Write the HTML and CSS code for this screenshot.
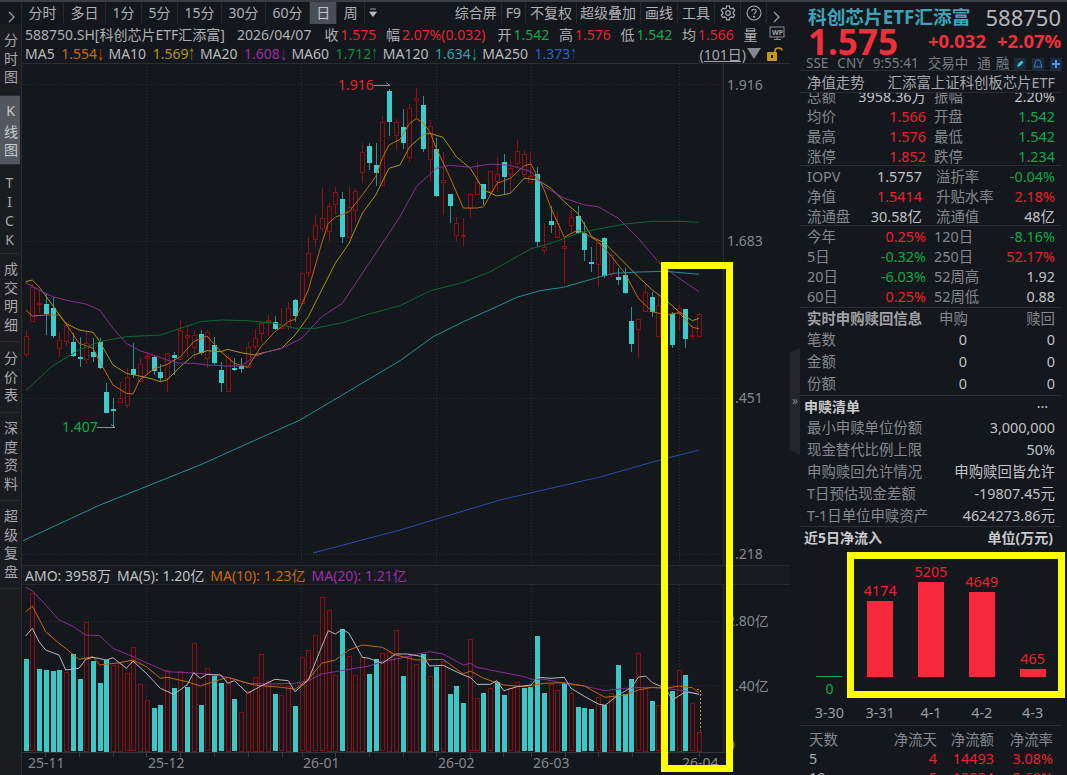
FILE: index.html
```html
<!DOCTYPE html>
<html lang="zh-CN">
<head>
  <meta charset="UTF-8">
  <title>科创芯片ETF汇添富 588750</title>
  <link rel="stylesheet" href="styles.css">
</head>
<body>
  <div class="top-strip"></div>
  <div class="app">
    <div class="main">
      <div class="toolbar">
        <div class="tool chevron"><svg width="8" height="12" viewBox="0 0 8 12"><path d="M1 1l5 5-5 5" fill="none" stroke="#9a9da1" stroke-width="1.3"/></svg></div>
        <div class="tool">分时</div>
        <div class="tool">多日</div>
        <div class="tool">1分</div>
        <div class="tool">5分</div>
        <div class="tool">15分</div>
        <div class="tool">30分</div>
        <div class="tool">60分</div>
        <div class="tool active">日</div>
        <div class="tool">周</div>
        <div class="tool tiny">
          <svg width="10" height="10" viewBox="0 0 10 10"><path d="M2 1h6M1.500 4h7L5 8.500z" fill="#b8babd" stroke="#b8babd" stroke-width=".8"/></svg>
        </div>
        <div class="tool-spacer"></div>
        <div class="tool right">综合屏</div>
        <div class="tool right">F9</div>
        <div class="tool right">不复权</div>
        <div class="tool right tight">超级叠加</div>
        <div class="tool right">画线</div>
        <div class="tool right">工具</div>
        <div class="tool icon">
          <svg width="16" height="16" viewBox="0 0 16 16" fill="none" stroke="#a9abae" stroke-width="1.200"><path d="M6.600 1h2.800l.4 2 1.500.9 2-.7 1.400 2.400-1.500 1.400v1.800l1.500 1.400-1.400 2.400-2-.7-1.500.9-.4 2H6.600l-.4-2-1.500-.9-2 .7-1.400-2.400 1.500-1.400V7.200L1.300 5.600l1.400-2.400 2 .7 1.500-.9z"/><circle cx="8" cy="8" r="2.300"/></svg>
        </div>
        <div class="tool icon">
          <svg width="16" height="16" viewBox="0 0 16 16" fill="none" stroke="#a9abae" stroke-width="1.100"><circle cx="8" cy="8" r="7"/><path d="M5.800 6.300C5.800 5 6.800 4.200 8 4.200s2.200.8 2.200 2c0 1.700-2.200 1.700-2.200 3.400"/><circle cx="8" cy="11.800" r=".5" fill="#a9abae"/></svg>
        </div>
        <div class="tool icon last"><svg width="8" height="12" viewBox="0 0 8 12"><path d="M1 1l5 5-5 5" fill="none" stroke="#9a9da1" stroke-width="1.300"/></svg></div>
      </div>

      <div class="workspace">
        <div class="side-nav">
          <div class="side-item first">分时图</div>
          <div class="side-item current">K线图</div>
          <div class="side-item tick">TICK</div>
          <div class="side-item tall">成交明细</div>
          <div class="side-item mid">分价表</div>
          <div class="side-item tall">深度资料</div>
          <div class="side-item tall">超级复盘</div>
        </div>

        <div class="chart-col">
          <div class="info-row">
            <span class="code">588750.SH[科创芯片ETF汇添富]</span>
            <span class="date">2026/04/07</span>
            <span class="stat">收<b class="red">1.575</b></span>
            <span class="stat">幅<b class="red">2.07%(0.032)</b></span>
            <span class="stat open">开<b class="green">1.542</b></span>
            <span class="stat">高<b class="red">1.576</b></span>
            <span class="stat">低<b class="green">1.542</b></span>
            <span class="stat">均<b class="red">1.566</b></span>
            <span class="stat">量</span>
            <svg class="wp-icon" width="18" height="16" viewBox="0 0 18 16">
              <rect x="1" y="1" width="14" height="10" fill="none" stroke="#888b90"/>
              <text x="3" y="9" font-size="7" font-weight="700" fill="#a0a2a6">WP</text>
              <path d="M5 13.500h7M8 11v2.500" stroke="#888b90"/>
              <path d="M15.500 10.500h2" stroke="#c8242e" stroke-dasharray="1 1"/>
            </svg>
          </div>
          <div class="ma-row">
            <span>MA5</span><span class="ma5">1.554<i>↓</i></span>
            <span>MA10</span><span class="ma10">1.569<i>↑</i></span>
            <span>MA20</span><span class="ma20">1.608<i>↓</i></span>
            <span>MA60</span><span class="ma60">1.712<i>↑</i></span>
            <span>MA120</span><span class="ma120">1.634<i>↓</i></span>
            <span>MA250</span><span class="ma250">1.373<i>↑</i></span>
            <span class="range">(101日)</span>
            <span class="range-arrow"></span>
            <svg class="lock" width="16" height="14" viewBox="0 0 16 14">
              <rect x="0" y="5" width="10" height="9" rx="1" fill="#c9971c"/>
              <rect x="4" y="8" width="2" height="3" fill="#14171c"/>
              <path d="M8 5V3.500C8 2 9.500 1 11.500 1S15 2 15 3.500" fill="none" stroke="#c9971c" stroke-width="1.500"/>
            </svg>
          </div>
          <svg id="kline" class="kline" width="768" height="501" viewBox="22 64 768 501"></svg>
          <div class="amo-row">
            <span>AMO: 3958万</span>
            <span>MA(5): 1.20亿</span>
            <span class="ma5">MA(10): 1.23亿</span>
            <span class="ma20">MA(20): 1.21亿</span>
          </div>
          <svg id="volume" class="volume" width="768" height="190" viewBox="22 585 768 190"></svg>
        </div>
      </div>
    </div>

    <div class="panel">
      <div class="stock-head">
        <div class="name-row"><span class="stock-name">科创芯片ETF汇添富</span><span class="stock-code">588750</span></div>
        <div class="price-row">
          <span class="price">1.575</span>
          <span class="change">+0.032</span>
          <span class="change">+2.07%</span>
        </div>
        <div class="status-row">
          <span>SSE</span><span>CNY</span><span>9:55:41</span><span>交易中</span><span class="tong">通</span><span>融</span>
          <div class="status-icons">
            <svg width="12" height="12" viewBox="0 0 12 12"><rect width="12" height="12" fill="#1c2a3a"/><path d="M3 9l1-3 3.500-3.500 2 2L6 8z" fill="#35c4d8"/></svg>
            <svg width="12" height="12" viewBox="0 0 12 12"><rect width="12" height="12" fill="#1c2a3a"/><path d="M6 2c-2 0-2.800 1.500-2.800 3.500L2 9h8L8.800 5.500C8.800 3.500 8 2 6 2z" fill="none" stroke="#2f7fd0"/></svg>
            <svg width="12" height="12" viewBox="0 0 12 12"><rect width="12" height="12" fill="#1c2a3a"/><path d="M6 2v8M2 6h8" stroke="#3b9cf0" stroke-width="2"/></svg>
          </div>
        </div>
      </div>

      <div class="nav-row"><span>净值走势</span><span class="fund-name">汇添富上证科创板芯片ETF</span></div>

      <div class="section sec-trade">
        <div class="qrow clipped"><span>总额</span><span class="val">3958.36万</span><span>振幅</span><span class="val">2.20%</span></div>
        <div class="qrow"><span>均价</span><span class="val red">1.566</span><span>开盘</span><span class="val green">1.542</span></div>
        <div class="qrow"><span>最高</span><span class="val red">1.576</span><span>最低</span><span class="val green">1.542</span></div>
        <div class="qrow"><span>涨停</span><span class="val red">1.852</span><span>跌停</span><span class="val green">1.234</span></div>
      </div>

      <div class="section sec-nav">
        <div class="qrow wide"><span>IOPV</span><span class="val">1.5757</span><span>溢折率</span><span class="val green">-0.04%</span></div>
        <div class="qrow wide"><span>净值</span><span class="val red">1.5414</span><span>升贴水率</span><span class="val red">2.18%</span></div>
        <div class="qrow wide"><span>流通盘</span><span class="val">30.58亿</span><span>流通值</span><span class="val">48亿</span></div>
      </div>

      <div class="section sec-perf">
        <div class="qrow"><span>今年</span><span class="val red">0.25%</span><span>120日</span><span class="val green">-8.16%</span></div>
        <div class="qrow"><span>5日</span><span class="val green">-0.32%</span><span>250日</span><span class="val red">52.17%</span></div>
        <div class="qrow"><span>20日</span><span class="val green">-6.03%</span><span>52周高</span><span class="val">1.92</span></div>
        <div class="qrow"><span>60日</span><span class="val red">0.25%</span><span>52周低</span><span class="val">0.88</span></div>
      </div>

      <div class="section sec-redeem">
        <div class="rrow head"><strong>实时申购赎回信息</strong><span>申购</span><span>赎回</span></div>
        <div class="rrow"><span>笔数</span><span class="val">0</span><span class="val">0</span></div>
        <div class="rrow"><span>金额</span><span class="val">0</span><span class="val">0</span></div>
        <div class="rrow"><span>份额</span><span class="val">0</span><span class="val">0</span></div>
      </div>

      <div class="section sec-list">
        <div class="list-title"><strong>申赎清单</strong><span class="dots">···</span></div>
        <div class="lrow"><span>最小申赎单位份额</span><span class="val">3,000,000</span></div>
        <div class="lrow"><span>现金替代比例上限</span><span class="val">50%</span></div>
        <div class="lrow"><span>申购赎回允许情况</span><span class="val">申购赎回皆允许</span></div>
        <div class="lrow"><span>T日预估现金差额</span><span class="val">-19807.45元</span></div>
        <div class="lrow"><span>T-1日单位申赎资产</span><span class="val">4624273.86元</span></div>
      </div>

      <div class="flow-title"><strong>近5日净流入</strong><strong>单位(万元)</strong></div>

      <div class="flow-chart">
        <div class="flow-col zero">
          <div class="flow-bar" style="height:1px"></div>
          <div class="flow-below">0</div>
          <div class="flow-date">3-30</div>
        </div>
        <div class="flow-col">
          <span class="flow-value">4174</span>
          <div class="flow-bar" style="height:76px"></div>
          <div class="flow-below"></div>
          <div class="flow-date">3-31</div>
        </div>
        <div class="flow-col">
          <span class="flow-value">5205</span>
          <div class="flow-bar" style="height:95px"></div>
          <div class="flow-below"></div>
          <div class="flow-date">4-1</div>
        </div>
        <div class="flow-col">
          <span class="flow-value">4649</span>
          <div class="flow-bar" style="height:85px"></div>
          <div class="flow-below"></div>
          <div class="flow-date">4-2</div>
        </div>
        <div class="flow-col">
          <span class="flow-value">465</span>
          <div class="flow-bar" style="height:8px"></div>
          <div class="flow-below"></div>
          <div class="flow-date">4-3</div>
        </div>
      </div>

      <div class="net-table">
        <div class="nrow head"><span>天数</span><span>净流天</span><span>净流额</span><span>净流率</span></div>
        <div class="nrow"><span class="days">5</span><span class="red">4</span><span class="red">14493</span><span class="red">3.08%</span></div>
        <div class="nrow"><span class="days">10</span><span class="red">5</span><span class="red">12834</span><span class="red">2.69%</span></div>
      </div>
    </div>
  </div>

  <div class="handle"><span>»</span></div>
  <div class="mark mark-chart"></div>
  <div class="mark mark-flow"></div>

  <script src="chart.js"></script>
</body>
</html>
```

FILE: styles.css
```css
* {
  box-sizing: border-box;
}

html, body {
  margin: 0;
  height: 100%;
  overflow: hidden;
}

body {
  position: relative;
  background: #14171c;
  color: #aeb0b3;
  font-family: "Noto Sans", "Noto Sans CJK SC", sans-serif;
  font-size: 14px;
}

b {
  font-weight: 400;
}

.red { color: #e8232f; }
.green { color: #12a84a; }
.ma5 { color: #c9690f; }
.ma10 { color: #b09a1c; }
.ma20 { color: #9c2fa8; }
.ma60 { color: #128a3c; }
.ma120 { color: #2aa5a8; }
.ma250 { color: #3160c8; }

.top-strip {
  height: 2px;
  background: #3a3d42;
}

.app {
  display: flex;
  height: 773px;
}

.main {
  width: 790px;
  flex: none;
}

/* toolbar */
.toolbar {
  display: flex;
  height: 22px;
  align-items: stretch;
  line-height: 22px;
}

.tool {
  padding: 0 6.500px;
  border-right: 1px solid #26292d;
  white-space: nowrap;
}

.tool.chevron {
  width: 22px;
  padding: 5px 0 0 8px;
}

.tool.active {
  width: 27px;
  padding: 0 6px;
  background: #4b4e56;
  color: #c4c6c9;
}

.tool.tiny {
  padding: 0 0 0 3px;
  border-right: none;
  width: 13px;
}

.tool.right {
  padding: 0 4px;
}

.tool.right.tight {
  padding-left: 3px;
}

.tool.icon {
  width: 26px;
  padding: 3px 0 0 5px;
}

.tool.last {
  width: 23px;
  padding: 5px 0 0 6px;
  border-right: none;
}

.tool-spacer {
  flex: 1;
}

.workspace {
  display: flex;
  height: 751px;
}

/* left tabs */
.side-nav {
  width: 22px;
  flex: none;
  background: #1a1c20;
  border-right: 1px solid #2a2d31;
}

.side-item {
  display: flex;
  justify-content: center;
  align-items: center;
  writing-mode: vertical-rl;
  text-orientation: upright;
  letter-spacing: 4.500px;
  height: 88px;
  padding-top: 3px;
  border-bottom: 1px solid #2a2d31;
  color: #a6a8ab;
}

.side-item.first { height: 72px; }
.side-item.current { height: 69px; background: #53565f; color: #c8cacc; }
.side-item.tick { height: 89px; letter-spacing: 0; }
.side-item.mid { height: 71px; }

/* chart column */
.chart-col {
  flex: 1;
  min-width: 0;
}

.info-row {
  display: flex;
  align-items: center;
  height: 20px;
  padding-left: 3px;
  white-space: nowrap;
}

.info-row .date { margin-left: 12px; }
.info-row .stat { margin-left: 9.700px; }
.info-row .date + .stat { margin-left: 13px; }
.info-row .stat.open { margin-left: 12px; }
.info-row .stat b { margin-left: 2px; }

.wp-icon {
  margin-left: auto;
  margin-right: 3px;
}

.ma-row {
  display: flex;
  align-items: center;
  gap: 6.500px;
  height: 20px;
  padding-left: 3px;
  border-bottom: 1px solid #2a2d31;
  color: #b8babd;
  white-space: nowrap;
}

.ma-row i {
  display: inline-block;
  width: 5px;
  font-style: normal;
  font-size: 13px;
  transform: scaleX(.55);
  transform-origin: left center;
}

.range {
  margin-left: auto;
  text-decoration: underline;
  color: #a6a8ab;
}

.range-arrow {
  margin-left: -6px;
  width: 0;
  height: 0;
  border-left: 7px solid transparent;
  border-right: 7px solid transparent;
  border-top: 11px solid #85888c;
}

.lock {
  margin-right: 7px;
}

.kline, .volume {
  display: block;
}

.amo-row {
  display: flex;
  align-items: center;
  gap: 6px;
  height: 20px;
  padding-left: 3px;
  background: #171a1f;
  border-top: 1px solid #26292d;
  border-bottom: 1px solid #26292d;
  color: #c0c2c5;
  white-space: nowrap;
}

/* right panel */
.panel {
  width: 277px;
  flex: none;
  padding: 0 6px 0 10px;
  overflow: hidden;
}

.stock-head {
  height: 69px;
  border-bottom: 1px solid #2a2d31;
}

.name-row {
  display: flex;
  justify-content: space-between;
  align-items: center;
  height: 26px;
  padding: 4px 0 0 8px;
  line-height: 1;
}

.stock-name {
  font-size: 18.700px;
  font-weight: 700;
  color: #3fa2b8;
}

.stock-code {
  font-size: 22px;
  color: #b4b6b9;
}

.price-row {
  display: flex;
  align-items: center;
  height: 26px;
  padding-left: 8px;
  line-height: 1;
  color: #f0303c;
}

.price {
  font-size: 35px;
  font-weight: 700;
  margin-right: 30px;
}

.change {
  font-size: 18.500px;
  font-weight: 700;
  margin-right: 11px;
}

.status-row {
  display: flex;
  align-items: center;
  gap: 9px;
  height: 15px;
  margin-top: 2px;
  padding-left: 6px;
  font-size: 13.500px;
  line-height: 1;
  color: #7c7f84;
  white-space: nowrap;
}

.status-row .tong {
  margin-right: -4px;
}

.status-icons {
  display: flex;
  gap: 6px;
  margin-left: -4px;
}

.nav-row {
  display: flex;
  justify-content: space-between;
  align-items: center;
  height: 22px;
  padding: 0 6px 0 7px;
  border-bottom: 1px solid #2a2d31;
  font-size: 14.400px;
  color: #a6a8ab;
}

.section {
  border-bottom: 1px solid #2a2d31;
  color: #85888c;
}

.val {
  justify-self: end;
  color: #c0c2c5;
  text-align: right;
  white-space: nowrap;
}

.val.red { color: #e8232f; }
.val.green { color: #12a84a; }

.sec-trade { height: 73px; overflow: hidden; }
.sec-nav { height: 60px; padding-top: 1px; }
.sec-perf { height: 82px; padding-top: 1px; }
.sec-redeem { height: 88px; }
.sec-list { height: 131px; }

.qrow {
  display: grid;
  grid-template-columns: 60px 59px 68px 61px;
  height: 20px;
  line-height: 20px;
  padding-left: 7px;
  font-size: 14.400px;
  white-space: nowrap;
}

.qrow.clipped {
  margin-top: -6px;
}

.qrow span:nth-child(3) {
  padding-left: 8px;
}

.qrow.wide {
  grid-template-columns: 60px 55px 74px 59px;
}

.qrow.wide span:nth-child(3) {
  padding-left: 14px;
}

.rrow {
  display: grid;
  grid-template-columns: 132px 28px 88px;
  height: 22px;
  line-height: 22px;
  padding-left: 7px;
  font-size: 14.400px;
}

.rrow.head {
  height: 21px;
  line-height: 21px;
  white-space: nowrap;
}

.rrow.head strong {
  color: #a0a2a5;
}

.rrow.head span:last-child {
  text-align: right;
}

.list-title {
  display: flex;
  justify-content: space-between;
  height: 21px;
  line-height: 21px;
  padding: 0 13px 0 4px;
  color: #c8cacc;
}

.dots {
  letter-spacing: 0;
}

.lrow {
  display: flex;
  justify-content: space-between;
  height: 22px;
  line-height: 22px;
  padding: 0 6px 0 7px;
  font-size: 14.400px;
}

.flow-title {
  display: flex;
  justify-content: space-between;
  height: 22px;
  line-height: 22px;
  padding: 0 8px 0 4px;
  color: #c8cacc;
}

.flow-chart {
  display: grid;
  grid-template-columns: repeat(5, 50.800px);
  height: 177px;
  padding-left: 4px;
  border-bottom: 1px solid #2a2d31;
}

.flow-col {
  display: flex;
  flex-direction: column;
  justify-content: flex-end;
  align-items: center;
}

.flow-value {
  color: #e8232f;
  font-size: 14.400px;
  line-height: 20px;
}

.flow-bar {
  width: 26px;
  background: #f62a3a;
}

.flow-col.zero .flow-bar {
  background: #12a84a;
}

.flow-below {
  height: 24px;
  line-height: 24px;
  color: #12a84a;
}

.flow-date {
  height: 24px;
  line-height: 24px;
  color: #9a9da1;
  font-size: 14.400px;
}

.net-table {
  padding: 4px 6px 0 7px;
}

.nrow {
  display: grid;
  grid-template-columns: 55px 75px 57px 59px;
  height: 19px;
  line-height: 19px;
  text-align: right;
  font-size: 14.400px;
}

.nrow span:first-child {
  text-align: left;
  padding-left: 2px;
}

.nrow.head {
  color: #85888c;
}

.nrow .days {
  padding-left: 11px;
  color: #a6a8ab;
}

/* pieces lying over the page */
.handle {
  position: absolute;
  left: 790px;
  top: 348px;
  width: 10px;
  height: 107px;
  background: #24262a;
  clip-path: polygon(0 5px, 100% 0, 100% 100%, 0 calc(100% - 5px));
  color: #85888c;
  font-size: 12px;
  line-height: 106px;
  text-align: center;
}

.mark {
  position: absolute;
  border: 7px solid #ffff00;
}

.mark-chart {
  left: 661px;
  top: 262px;
  width: 72px;
  height: 510px;
}

.mark-flow {
  left: 847px;
  top: 552px;
  width: 218px;
  height: 146px;
}
```

FILE: chart.js
```js
// x of bar i in page pixels
function barX(i) {
  return 25.7 + 6.73 * i;
}

// candles: colour, body top, body bottom, wick top, wick bottom
// y values were read off at 3x, from page y = 80
const candles = [
  ['r',768,822,750,832],['r',622,724,612,724],['r',670,674,630,700],['c',672,703,640,765],['c',684,767,650,775],
  ['r',780,805,755,828],['r',735,782,725,798],['c',785,828,760,832],['c',831,835,770,860],['r',790,838,755,852],
  ['c',815,830,775,845],['c',785,862,775,868],['c',935,997,910,1000],['c',988,992,955,1044],['r',953,965,905,965],
  ['r',892,976,865,985],['c',868,885,790,895],['r',852,902,835,905],['r',829,834,815,880],['c',832,873,825,885],
  ['c',876,893,852,905],['r',820,895,818,935],['c',825,835,815,885],['r',750,838,720,840],['r',765,772,735,830],
  ['r',765,800,750,838],['c',763,820,750,825],['r',755,832,750,865],['c',795,850,770,855],['c',870,910,845,935],
  ['r',830,932,825,932],['c',865,872,835,873],['c',858,868,835,880],['r',800,860,785,865],['r',775,800,748,808],
  ['r',730,760,725,785],['r',720,724,705,770],['c',726,746,708,750],['r',735,745,685,748],['r',685,738,665,750],
  ['c',661,708,658,725],['r',580,670,580,672],['r',520,578,470,592],['r',436,478,405,498],['r',413,442,325,455],
  ['r',378,453,368,483],['r',335,372,322,405],['c',358,472,335,488],['r',382,472,322,472],['r',332,388,325,425],
  ['r',215,274,188,308],['c',198,248,190,270],['c',254,278,190,318],['r',125,315,108,318],['c',32,124,28,168],
  ['r',125,165,118,210],['c',142,190,88,207],['r',84,232,72,245],['r',55,62,25,118],['c',75,206,48,215],
  ['r',138,238,120,305],['c',207,347,175,352],['r',300,307,215,405],['c',343,378,345,428],['r',428,463,412,483],
  ['r',464,468,415,497],['r',342,385,340,415],['r',305,340,245,340],['c',313,357,313,375],['r',274,335,272,340],
  ['r',283,305,232,335],['c',247,292,222,342],['r',264,282,238,338],['r',212,247,180,265],['r',222,283,210,295],
  ['r',288,307,215,308],['c',283,487,262,502],['r',502,510,430,522],['c',423,434,378,460],['r',430,472,395,475],
  ['r',498,504,470,612],['r',412,436,390,460],['c',408,458,378,462],['c',458,510,425,542],['c',545,552,500,575],
  ['r',490,553,485,620],['c',475,590,472,595],['r',524,582,520,590],['c',590,600,565,615],['c',585,638,563,642],
  ['c',722,790,682,817],['r',717,747,715,835],['r',637,695,608,695],['c',652,698,636,710],['r',676,768,645,770],
  ['r',690,740,670,745],['c',702,795,695,803],['r',684,700,675,750],['c',686,776,686,803],['r',766,770,735,780],
  ['r',702,768,700,770]
];

// volume: colour + top of bar, read off at 3x from page y = 560, base at 572
const volumes = [
  'c298','r100','c328','c330','c332','c330','r335','c283','c358','r185','c302','c370','c300','r315','r305','r340','r262',
  'r372','r420','c445','c435','r330','c385','r332','c380','r248','c435','r325','c347','c370','r350','c418','r455','r392',
  'r350','r282','r362','c403','r406','r378','c437','r292','r270','r226','r112','r150','r345','c208','r288','r345','r290',
  'c342','c298','r280','r275','r210','c348','r288','r312','c282','r348','c322','r302','c402','c378','c428','r238','r415',
  'c398','r385','c365','c404','r385','r365','c385','c382','c228','c398','r372','r390','c370','r400','c440','c445','c448',
  'r412','c435','r400','c316','c402','c356','r280','r380','c424','r436','r440','c394','r330','c346','r430','r515'
];

// moving averages as [x3, y3] pairs, x3 is page x * 3
const priceLines = [
  { color: '#c0690f', pts: [77,690,97,708,137,705,177,705,197,730,237,790,279,805,299,845,339,915,379,940,399,942,419,900,460,868,501,853,541,830,581,785,621,768,663,815,703,850,743,862,783,800,825,755,865,725,885,718,925,630,965,490,985,430,1006,412,1047,395,1087,345,1127,290,1147,235,1167,195,1200,178,1229,130,1249,116,1269,128,1289,155,1309,205,1349,290,1390,384,1431,384,1451,380,1491,310,1531,295,1573,257,1593,252,1633,330,1653,385,1693,472,1733,450,1755,460,1795,485,1835,530,1875,580,1915,655,1957,695,1997,705,2037,698,2077,742,2097,746] },
  { color: '#a8921e', pts: [77,605,97,600,117,620,157,675,197,730,237,750,279,757,299,785,339,855,379,880,419,888,460,898,481,905,501,900,541,860,581,825,621,812,663,815,683,808,723,818,763,825,803,815,845,805,885,765,925,710,965,630,1006,550,1047,490,1087,400,1127,345,1167,265,1200,255,1229,200,1269,165,1289,160,1329,172,1369,230,1411,265,1451,330,1491,348,1531,340,1573,295,1613,300,1653,325,1693,365,1733,400,1775,470,1815,490,1855,530,1915,590,1957,630,1997,660,2037,695,2077,722,2097,715] },
  { color: '#8a2f96', pts: [77,608,117,630,157,650,197,660,257,672,299,690,339,745,379,790,419,812,460,825,501,840,541,850,581,850,621,855,683,858,723,858,763,830,803,815,845,805,905,775,965,710,1027,670,1087,580,1147,490,1200,410,1249,320,1309,265,1349,256,1411,262,1471,252,1531,256,1593,275,1633,320,1693,355,1755,375,1795,380,1855,415,1915,475,1977,548,2037,595,2097,635] },
  { color: '#0f6a30', pts: [77,932,157,858,237,810,299,785,379,770,481,765,541,745,601,725,663,720,743,722,825,730,885,745,945,745,1027,728,1107,702,1200,677,1289,633,1390,607,1471,575,1533,540,1593,506,1653,490,1733,460,1795,447,1875,432,1957,424,2037,424,2097,427] },
  { color: '#2a8a98', pts: [69,1382,300,1275,600,1155,900,1020,1200,842,1300,770,1390,725,1490,680,1550,652,1620,632,1690,622,1795,592,1840,580,1915,576,1997,574,2097,583] },
  { color: '#2a4fa8', pts: [939,1419,1200,1350,1500,1260,1800,1191,1980,1140,2097,1110] }
];

const volumeLines = [
  { color: '#8a2f96', pts: [77,82,97,92,137,135,177,180,217,198,257,225,299,227,339,265,399,290,439,308,501,335,561,338,621,342,683,352,743,370,803,372,885,370,925,362,965,342,1006,335,1047,328,1107,318,1147,305,1200,295,1249,283,1289,275,1329,282,1390,315,1411,310,1431,322,1511,338,1573,350,1593,358,1633,358,1693,370,1753,378,1815,392,1875,385,1935,382,1997,385,2057,393,2097,403] },
  { color: '#c0690f', pts: [77,155,97,138,137,215,177,250,197,265,237,298,279,290,299,315,359,308,399,300,439,320,481,355,501,352,561,365,601,378,663,358,683,352,763,375,845,382,885,388,925,358,965,310,1006,300,1047,270,1087,255,1147,262,1187,285,1200,288,1249,300,1329,298,1390,342,1411,333,1451,355,1511,375,1573,380,1633,370,1693,368,1753,378,1815,412,1875,405,1915,390,1957,382,1997,385,2037,378,2077,383,2097,398] },
  { color: '#b4b6b9', pts: [77,228,97,205,117,245,137,270,177,285,197,330,237,325,257,298,279,292,319,300,339,293,379,325,399,303,439,340,481,385,521,403,561,375,581,338,601,355,621,343,663,345,683,370,703,362,743,400,783,378,825,358,865,362,885,395,925,360,965,260,985,212,1006,222,1027,208,1047,220,1087,292,1107,295,1147,310,1187,282,1222,282,1269,290,1289,318,1329,316,1390,345,1411,352,1431,373,1471,373,1491,362,1511,392,1551,380,1593,375,1613,352,1653,355,1693,352,1713,385,1755,410,1795,432,1815,436,1855,405,1895,382,1915,352,1937,348,1957,368,1997,385,2017,420,2057,395,2097,403] }
];

function polyline(line, yBase) {
  let pts = '';
  for (let i = 0; i < line.pts.length; i += 2) {
    pts += `${(line.pts[i] / 3).toFixed(1)},${(yBase + line.pts[i + 1] / 3).toFixed(1)} `;
  }
  return `<polyline points="${pts}" fill="none" stroke="${line.color}" stroke-width="1" stroke-linejoin="round"/>`;
}

const gridY = [84.5, 241.5, 398.5, 554.5];
const gridX = [146.5, 301.5, 436.5, 531.5, 679.5];

let html = '';
gridY.forEach(y => {
  html += `<line x1="22" x2="723" y1="${y}" y2="${y}" stroke="#2a2d32" stroke-dasharray="1 2"/>`;
});
gridX.forEach(x => {
  html += `<line x1="${x}" x2="${x}" y1="64" y2="565" stroke="#2a2d32" stroke-dasharray="1 2"/>`;
});
html += '<line x1="723.5" x2="723.5" y1="64" y2="565" stroke="#2c2f34"/>';

candles.forEach((c, i) => {
  const x = Math.round(barX(i));
  const t = 80 + c[1] / 3;
  const b = 80 + c[2] / 3;
  const wt = 80 + c[3] / 3;
  const wb = 80 + c[4] / 3;
  const wick = c[0] === 'r' ? '#960e13' : '#2b8f92';
  html += `<g shape-rendering="crispEdges"><line x1="${x + 0.5}" x2="${x + 0.5}" y1="${wt}" y2="${wb}" stroke="${wick}"/>`;
  if (c[0] === 'r') {
    html += `<rect x="${x - 1.5}" y="${Math.round(t) + 0.5}" width="4" height="${Math.max(1, Math.round(b - t))}" fill="#14171c" stroke="#900d12"/></g>`;
  } else {
    html += `<rect x="${x - 2}" y="${Math.round(t)}" width="5" height="${Math.max(2, Math.round(b - t))}" fill="#3ccccc"/></g>`;
  }
});

priceLines.forEach(l => { html += polyline(l, 80); });

// axis labels and the high / low notes
const axisLabels = [[85, '1.916'], [241, '1.683'], [398, '1.451'], [554, '1.218']];
axisLabels.forEach(a => {
  html += `<text x="727" y="${a[0] + 5}" font-size="14" fill="#85888c">${a[1]}</text>`;
});
html += '<text x="338" y="90" font-size="14" fill="#e8232f">1.916</text>';
html += '<path d="M374 85.500h16m-4-3l4 3" fill="none" stroke="#8c8f93"/>';
html += '<text x="62" y="432" font-size="14" fill="#12a84a">1.407</text>';
html += '<path d="M97 427.500h18m-4-3l4 3" fill="none" stroke="#8c8f93"/>';
document.getElementById('kline').innerHTML = html;

// volume pane
html = '';
[621.5, 685.5].forEach(y => {
  html += `<line x1="22" x2="723" y1="${y}" y2="${y}" stroke="#2a2d32" stroke-dasharray="1 2"/>`;
});
gridX.forEach(x => {
  html += `<line x1="${x}" x2="${x}" y1="585" y2="752" stroke="#2a2d32" stroke-dasharray="1 2"/>`;
});
html += '<line x1="723.5" x2="723.5" y1="585" y2="752" stroke="#2c2f34"/>';
html += '<line x1="22" x2="725" y1="752.500" y2="752.500" stroke="#33363b"/>';

volumes.forEach((v, i) => {
  const x = Math.round(barX(i));
  const top = 560 + Number(v.slice(1)) / 3;
  const h = Math.round(750.7 - top);
  if (v[0] === 'r') {
    html += `<rect x="${x - 1.5}" y="${Math.round(top) + 0.5}" width="4" height="${h}" fill="#14171c" stroke="#8f0c10" shape-rendering="crispEdges"/>`;
  } else {
    html += `<rect x="${x - 2}" y="${Math.round(top)}" width="5" height="${h + 1}" fill="#3cc6c6" shape-rendering="crispEdges"/>`;
  }
});
volumeLines.forEach(l => { html += polyline(l, 560); });
html += '<path d="M697 689.500h3.500V731" fill="none" stroke="#d8940f" stroke-dasharray="2 2"/>';

[45, 79, 113, 146, 180, 214, 248, 282, 302, 335, 369, 403, 436, 470, 503, 531, 565, 598, 632, 665, 699].forEach(x => {
  html += `<line x1="${x + 0.5}" x2="${x + 0.5}" y1="752" y2="757" stroke="#3a3d42"/>`;
});
[['25-11', 28], ['25-12', 148], ['26-01', 303], ['26-02', 438], ['26-03', 533], ['26-04', 682]].forEach(d => {
  html += `<text x="${d[1]}" y="768" font-size="14" fill="#85888c">${d[0]}</text>`;
});
[[621, '2.80亿'], [686, '1.40亿'], [745, '0']].forEach(a => {
  html += `<text x="727" y="${a[0] + 5}" font-size="14" fill="#85888c">${a[1]}</text>`;
});
document.getElementById('volume').innerHTML = html;
```
